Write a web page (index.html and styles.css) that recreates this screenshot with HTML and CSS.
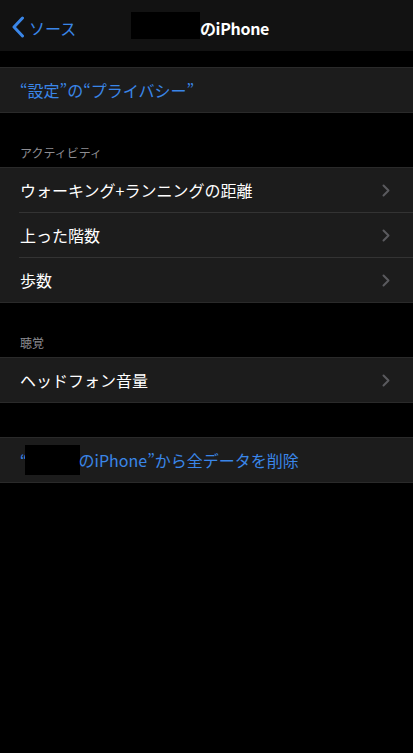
FILE: index.html
```html
<!DOCTYPE html>
<html lang="ja">
<head>
<meta charset="utf-8">
<link rel="stylesheet" href="styles.css">
</head>
<body>
<header class="nav">
  <a class="back">
    <svg class="back-icon" width="14" height="22" viewBox="0 0 14 22"><path d="M11.5 2 L3 11 L11.5 20" fill="none" stroke="#3a86e8" stroke-width="3" stroke-linecap="round" stroke-linejoin="round"/></svg>
    <span>ソース</span>
  </a>
  <div class="title"><span class="mask title-mask"></span>のiPhone</div>
  <div></div>
</header>

<section class="group first">
  <div class="row link">“設定”の“プライバシー”</div>
</section>

<div class="section-head">アクティビティ</div>
<section class="group">
  <div class="row"><span>ウォーキング+ランニングの距離</span><svg class="chev" width="8" height="13" viewBox="0 0 8 13"><path d="M1.5 1.5 L6.5 6.5 L1.5 11.5" fill="none" stroke="#5a5a5e" stroke-width="2" stroke-linecap="round" stroke-linejoin="round"/></svg></div>
  <div class="row"><span>上った階数</span><svg class="chev" width="8" height="13" viewBox="0 0 8 13"><path d="M1.5 1.5 L6.5 6.5 L1.5 11.5" fill="none" stroke="#5a5a5e" stroke-width="2" stroke-linecap="round" stroke-linejoin="round"/></svg></div>
  <div class="row"><span>歩数</span><svg class="chev" width="8" height="13" viewBox="0 0 8 13"><path d="M1.5 1.5 L6.5 6.5 L1.5 11.5" fill="none" stroke="#5a5a5e" stroke-width="2" stroke-linecap="round" stroke-linejoin="round"/></svg></div>
</section>

<div class="section-head">聴覚</div>
<section class="group">
  <div class="row"><span>ヘッドフォン音量</span><svg class="chev" width="8" height="13" viewBox="0 0 8 13"><path d="M1.5 1.5 L6.5 6.5 L1.5 11.5" fill="none" stroke="#5a5a5e" stroke-width="2" stroke-linecap="round" stroke-linejoin="round"/></svg></div>
</section>

<section class="group last">
  <div class="row link">“<span class="mask row-mask"></span>のiPhone”から全データを削除</div>
</section>
</body>
</html>
```
FILE: styles.css
```css
html, body {
  margin: 0;
  padding: 0;
  background: #000;
}
body {
  font-family: "Noto Sans CJK JP", "Noto Sans", sans-serif;
  color: #fff;
  width: 413px;
  height: 753px;
  overflow: hidden;
}
.nav {
  height: 51px;
  box-sizing: border-box;
  padding-top: 4px;
  background: #121212;
  display: grid;
  grid-template-columns: 1fr auto 1fr;
  align-items: center;
}
.back {
  display: flex;
  align-items: center;
  padding-left: 11px;
  color: #3a86e8;
  font-size: 16px;
  gap: 4px;
}
.back-icon {
  margin-top: -2px;
}
.title {
  font-size: 16px;
  font-weight: 700;
  letter-spacing: -0.3px;
  display: flex;
  align-items: center;
  margin-right: 13px;
}
.mask {
  display: inline-block;
  background: #000;
}
.title-mask {
  width: 69px;
  height: 27px;
  margin-top: -4px;
}
.group {
  background: #1c1c1c;
  border-top: 1px solid #2a2a2a;
  border-bottom: 1px solid #2a2a2a;
}
.group.first {
  margin-top: 16px;
}
.group.last {
  margin-top: 34px;
}
.row {
  height: 44px;
  display: flex;
  align-items: center;
  justify-content: space-between;
  padding: 0 23px 0 20px;
  font-size: 16px;
}
.row + .row {
  border-top: 1px solid #333;
  margin-left: 19px;
  padding-left: 1px;
  height: 44px;
}
.link {
  color: #3a86e8;
  justify-content: flex-start;
}
.row-mask {
  width: 55px;
  height: 30px;
  margin-left: -3px;
  margin-right: -1px;
}
.section-head {
  padding: 32px 20px 6px;
  font-size: 12px;
  line-height: 16px;
  color: #8d8d92;
}
```
